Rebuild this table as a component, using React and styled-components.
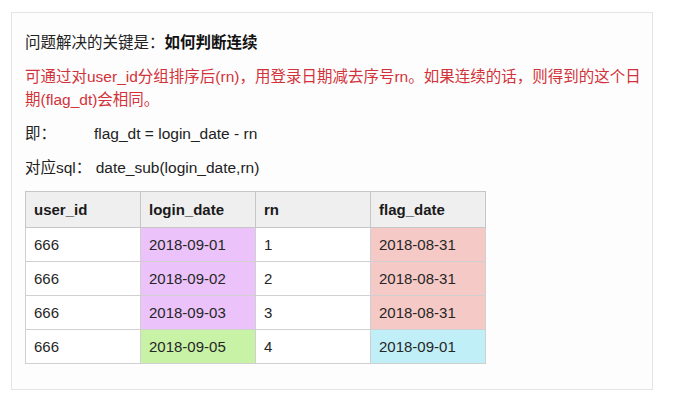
import React from 'react';
import styled, { createGlobalStyle } from 'styled-components';

const GlobalStyle = createGlobalStyle`
  html, body {
    margin: 0;
    padding: 0;
    background: #ffffff;
  }
  body {
    font-family: "Liberation Sans", Arial, "Noto Sans CJK SC", sans-serif;
    color: #1f1f1f;
  }
`;

const Page = styled.div`
  padding: 12px 29px 13px 11px;
`;

const Card = styled.section`
  border: 1px solid #e4e4e4;
  background: #fdfdfd;
  padding: 18px 6px 25px 13px;
`;

const Paragraph = styled.p`
  margin: 0 0 11px 0;
  font-size: 15.5px;
  line-height: 23px;
  color: ${props => (props.tone === 'red' ? '#d2333a' : '#222222')};
`;

const Strong = styled.strong`
  font-weight: 700;
  color: #111111;
`;

const Term = styled.span`
  display: inline-block;
  width: ${props => props.width || 'auto'};
`;

const Table = styled.table`
  margin-top: 12px;
  border-collapse: collapse;
  table-layout: fixed;
  width: 461px;
  font-size: 15px;
  border: 1px solid #c9c9c9;
`;

const HeadCell = styled.th`
  height: 35px;
  padding: 0 8px;
  text-align: left;
  font-weight: 700;
  color: #1a1a1a;
  background: #efefef;
  border: 1px solid #c6c6c6;
`;

const CELL_COLORS = {
  purple: '#ebc3fa',
  pink: '#f5c9c6',
  green: '#c8f2a6',
  cyan: '#c1eff8',
};

const Cell = styled.td`
  height: 33px;
  padding: 0 8px;
  color: #262626;
  background: ${props => CELL_COLORS[props.tint] || '#ffffff'};
  border: 1px solid #d0d0d0;
`;

const rows = [
  { id: '666', login: '2018-09-01', loginTint: 'purple', rn: '1', flag: '2018-08-31', flagTint: 'pink' },
  { id: '666', login: '2018-09-02', loginTint: 'purple', rn: '2', flag: '2018-08-31', flagTint: 'pink' },
  { id: '666', login: '2018-09-03', loginTint: 'purple', rn: '3', flag: '2018-08-31', flagTint: 'pink' },
  { id: '666', login: '2018-09-05', loginTint: 'green', rn: '4', flag: '2018-09-01', flagTint: 'cyan' },
];

const App = () => (
  <Page>
    <GlobalStyle />
    <Card>
      <Paragraph>
        问题解决的关键是：<Strong>如何判断连续</Strong>
      </Paragraph>
      <Paragraph tone="red">
        可通过对user_id分组排序后(rn)，用登录日期减去序号rn。如果连续的话，则得到的这个日期(flag_dt)会相同。
      </Paragraph>
      <Paragraph>
        <Term width="69px">即：</Term>flag_dt = login_date - rn
      </Paragraph>
      <Paragraph>
        <Term>对应sql：</Term> date_sub(login_date,rn)
      </Paragraph>
      <Table>
        <thead>
          <tr>
            <HeadCell>user_id</HeadCell>
            <HeadCell>login_date</HeadCell>
            <HeadCell>rn</HeadCell>
            <HeadCell>flag_date</HeadCell>
          </tr>
        </thead>
        <tbody>
          {rows.map(row => (
            <tr key={row.rn}>
              <Cell>{row.id}</Cell>
              <Cell tint={row.loginTint}>{row.login}</Cell>
              <Cell>{row.rn}</Cell>
              <Cell tint={row.flagTint}>{row.flag}</Cell>
            </tr>
          ))}
        </tbody>
      </Table>
    </Card>
  </Page>
);

export default App;
